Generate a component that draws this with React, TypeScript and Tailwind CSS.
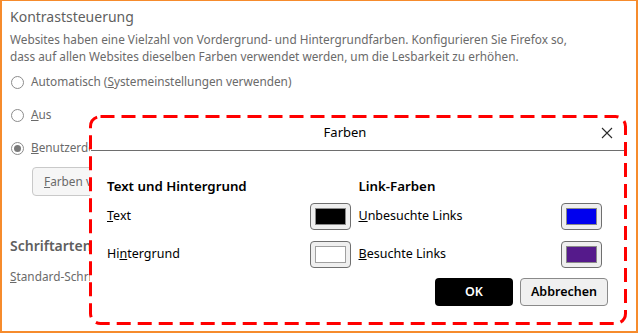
import React from "react";

const font = { fontFamily: '"Noto Sans", "Open Sans", sans-serif' };

const Radio: React.FC<{ checked?: boolean; children: React.ReactNode }> = ({ checked, children }) => (
  <div className="flex items-center h-[20px] gap-[7px]">
    <span className="flex items-center justify-center w-[13px] h-[13px] ml-[1px] rounded-full border border-[#8c8c8c] bg-white">
      {checked && <span className="w-[7px] h-[7px] rounded-full bg-[#7a7a7a]" />}
    </span>
    <span className="text-[11.8px] text-[#6a6a6a] whitespace-nowrap">{children}</span>
  </div>
);

const Swatch: React.FC<{ color: string; light?: boolean }> = ({ color, light }) => (
  <button className="flex items-center justify-center w-[41px] h-[27px] rounded-[4px] border border-[#6f6f6f] bg-[#efefef]">
    <span
      className={`w-[31px] h-[17px] border ${light ? "border-[#a0a0a0]" : "border-[#8a8a8a]"}`}
      style={{ backgroundColor: color }}
    />
  </button>
);

const Row: React.FC<{ label: React.ReactNode; color: string; light?: boolean }> = ({ label, color, light }) => (
  <div className="flex items-center justify-between h-[27px]">
    <span className="text-[12.5px] text-black">{label}</span>
    <Swatch color={color} light={light} />
  </div>
);

const App: React.FC = () => {
  return (
    <div className="w-[640px] h-[334px] bg-white" style={font}>
      <div className="relative w-[638px] h-[333px] border-t border-l-2 border-r-2 border-b-2 border-[#f68b2c] overflow-hidden">
        <div className="flex flex-col items-start pl-[8px] pt-[6px]">
          <p className="text-[14px] leading-[20px] text-[#5f5f5f]">Kontraststeuerung</p>
          <p className="mt-[4px] text-[11.8px] leading-[17px] text-[#6a6a6a] whitespace-nowrap">
            Websites haben eine Vielzahl von Vordergrund- und Hintergrundfarben. Konfigurieren Sie Firefox so,
            <br />
            dass auf allen Websites dieselben Farben verwendet werden, um die Lesbarkeit zu erhöhen.
          </p>
          <div className="mt-[7px] flex flex-col gap-[13px]">
            <Radio>
              Automatisch (<u>S</u>ystemeinstellungen verwenden)
            </Radio>
            <Radio>
              <u>A</u>us
            </Radio>
            <Radio checked>
              <u>B</u>enutzerdefiniert
            </Radio>
          </div>
          <button className="mt-[9px] ml-[22px] h-[29px] px-[11px] rounded-[4px] border border-[#c9c9c9] bg-[#f6f6f6] text-[11.8px] text-[#6a6a6a] whitespace-nowrap">
            <u>F</u>arben verwalten…
          </button>
          <p className="mt-[40px] text-[14px] leading-[20px] font-semibold text-[#5f5f5f]">Schriftarten</p>
          <p className="mt-[12px] text-[11.8px] leading-[17px] text-[#6a6a6a]">
            <u>S</u>tandard-Schriftart
          </p>
        </div>

        <div className="absolute left-[88px] top-[115px] w-[535px] h-[208px] rounded-[10px] bg-white flex flex-col">
          <div className="flex items-center h-[35px] border-b border-[#6e6e6e] pr-[9px] mx-[1px]">
            <span className="flex-1 text-center text-[13px] text-black">Farben</span>
            <span className="flex items-center justify-center w-[16px] h-[16px]">
              <svg width="12" height="12" viewBox="0 0 12 12">
                <path d="M1 1 L11 11 M11 1 L1 11" stroke="#2a2a2a" strokeWidth="1.1" fill="none" />
              </svg>
            </span>
          </div>
          <div className="grid grid-cols-2 gap-x-[8px] pl-[17px] pr-[23px] pt-[25px]">
            <div className="flex flex-col">
              <p className="text-[13.3px] leading-[20px] font-semibold text-black">Text und Hintergrund</p>
              <div className="mt-[7px] flex flex-col gap-[11px]">
                <Row label={<><u>T</u>ext</>} color="#000000" />
                <Row label={<>Hi<u>n</u>tergrund</>} color="#ffffff" light />
              </div>
            </div>
            <div className="flex flex-col">
              <p className="text-[13.3px] leading-[20px] font-semibold text-black">Link-Farben</p>
              <div className="mt-[7px] flex flex-col gap-[11px]">
                <Row label={<><u>U</u>nbesuchte Links</>} color="#0000ee" />
                <Row label={<><u>B</u>esuchte Links</>} color="#551a8b" />
              </div>
            </div>
          </div>
          <div className="flex justify-end gap-[7px] pr-[17px] mt-[10px]">
            <button className="w-[78px] h-[28px] rounded-[4px] bg-black text-white text-[12.5px] font-semibold">OK</button>
            <button className="w-[88px] h-[28px] rounded-[4px] border border-[#8a8a8a] bg-[#f0f0f0] text-black text-[12.5px] font-semibold">
              Abbrechen
            </button>
          </div>
          <svg
            className="absolute left-0 top-0 pointer-events-none overflow-visible"
            width="535"
            height="208"
            viewBox="0 0 535 208"
          >
            <rect
              x="0.5"
              y="0.5"
              width="535"
              height="207"
              rx="10"
              fill="none"
              stroke="#ff0000"
              strokeWidth="3"
              strokeDasharray="14 7"
            />
          </svg>
        </div>
      </div>
    </div>
  );
};

export default App;
